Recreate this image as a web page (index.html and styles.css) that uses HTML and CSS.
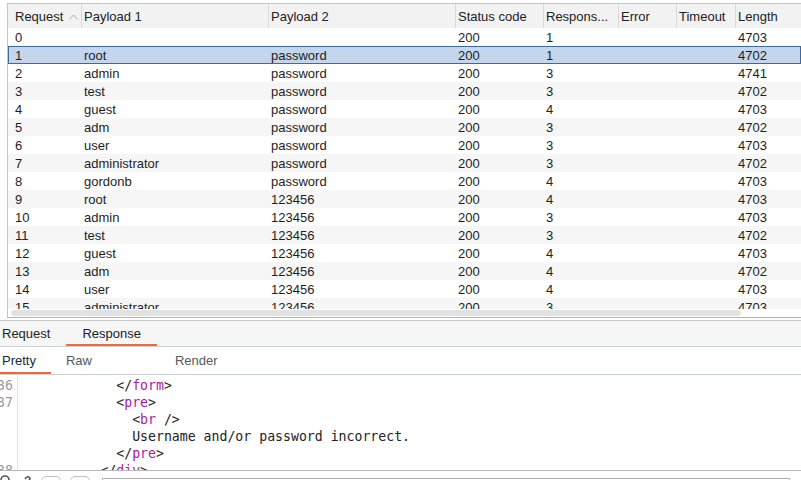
FILE: index.html
```html
<!DOCTYPE html>
<html>
<head>
<meta charset="utf-8">
<link rel="stylesheet" href="styles.css">
</head>
<body>
<div class="results">
  <div class="head">
    <div class="hc first">Request <svg class="sort" width="9" height="6" viewBox="0 0 9 6"><polyline points="0.5,5.5 4.5,1 8.5,5.5" fill="none" stroke="#b0b0b0" stroke-width="1"/></svg></div>
    <div class="hc">Payload 1</div>
    <div class="hc">Payload 2</div>
    <div class="hc">Status code</div>
    <div class="hc">Respons...</div>
    <div class="hc">Error</div>
    <div class="hc">Timeout</div>
    <div class="hc">Length</div>
  </div>
  <div class="body">
    <div class="row"><span>0</span><span></span><span></span><span>200</span><span>1</span><span></span><span></span><span>4703</span></div>
    <div class="row alt sel"><span>1</span><span>root</span><span>password</span><span>200</span><span>1</span><span></span><span></span><span>4702</span></div>
    <div class="row"><span>2</span><span>admin</span><span>password</span><span>200</span><span>3</span><span></span><span></span><span>4741</span></div>
    <div class="row alt"><span>3</span><span>test</span><span>password</span><span>200</span><span>3</span><span></span><span></span><span>4702</span></div>
    <div class="row"><span>4</span><span>guest</span><span>password</span><span>200</span><span>4</span><span></span><span></span><span>4703</span></div>
    <div class="row alt"><span>5</span><span>adm</span><span>password</span><span>200</span><span>3</span><span></span><span></span><span>4702</span></div>
    <div class="row"><span>6</span><span>user</span><span>password</span><span>200</span><span>3</span><span></span><span></span><span>4703</span></div>
    <div class="row alt"><span>7</span><span>administrator</span><span>password</span><span>200</span><span>3</span><span></span><span></span><span>4702</span></div>
    <div class="row"><span>8</span><span>gordonb</span><span>password</span><span>200</span><span>4</span><span></span><span></span><span>4703</span></div>
    <div class="row alt"><span>9</span><span>root</span><span>123456</span><span>200</span><span>4</span><span></span><span></span><span>4703</span></div>
    <div class="row"><span>10</span><span>admin</span><span>123456</span><span>200</span><span>3</span><span></span><span></span><span>4703</span></div>
    <div class="row alt"><span>11</span><span>test</span><span>123456</span><span>200</span><span>3</span><span></span><span></span><span>4702</span></div>
    <div class="row"><span>12</span><span>guest</span><span>123456</span><span>200</span><span>4</span><span></span><span></span><span>4703</span></div>
    <div class="row alt"><span>13</span><span>adm</span><span>123456</span><span>200</span><span>4</span><span></span><span></span><span>4702</span></div>
    <div class="row"><span>14</span><span>user</span><span>123456</span><span>200</span><span>4</span><span></span><span></span><span>4703</span></div>
    <div class="row alt"><span>15</span><span>administrator</span><span>123456</span><span>200</span><span>3</span><span></span><span></span><span>4703</span></div>
  </div>
  <div class="hscroll"><div class="thumb"></div></div>
</div>

<div class="tabs">
  <div class="tab">Request</div>
  <div class="tab active">Response</div>
</div>

<div class="subtabs">
  <div class="subtab active">Pretty</div>
  <div class="subtab dim">Raw</div>
  <div class="subtab dim far">Render</div>
</div>

<div class="editor">
  <div class="gutter">
    <div class="ln">36</div>
    <div class="ln">37</div>
    <div class="ln"></div>
    <div class="ln"></div>
    <div class="ln"></div>
    <div class="ln">38</div>
  </div>
  <div class="code">
<div class="cl">            &lt;/<span class="tg">form</span>&gt;</div>
<div class="cl">            &lt;<span class="tg">pre</span>&gt;</div>
<div class="cl">              &lt;<span class="tg">br</span> /&gt;</div>
<div class="cl">              Username and/or password incorrect.</div>
<div class="cl">            &lt;/<span class="tg">pre</span>&gt;</div>
<div class="cl">          &lt;/<span class="tg">div</span>&gt;</div>
  </div>
</div>

<div class="toolbar">
  <svg class="tb-icon" width="12" height="12" viewBox="0 0 12 12"><circle cx="5" cy="6" r="4" fill="none" stroke="#555" stroke-width="1.6"/></svg>
  <svg class="tb-icon2" width="8" height="12" viewBox="0 0 8 12"><path d="M1 4 Q4 0 6 3 Q6 5 4 6 L4 8" fill="none" stroke="#555" stroke-width="1.5"/></svg>
  <div class="tb-btn"></div>
  <div class="tb-btn"></div>
  <div class="tb-input"></div>
</div>
</body>
</html>
```

FILE: styles.css
```css
html, body {
  margin: 0;
  padding: 0;
  background: #ffffff;
  overflow: hidden;
  height: 480px;
}
body {
  font-family: "Liberation Sans", Arial, sans-serif;
  font-size: 13px;
  color: #1e1e1e;
}
.results {
  margin: 3px 0 0 7px;
  border-top: 1px solid #c4c4c4;
  border-left: 1px solid #c4c4c4;
  border-bottom: 1px solid #b4b4b4;
  overflow: hidden;
}
.head, .row {
  display: grid;
  grid-template-columns: 73px 187px 187px 88px 75px 58px 59px 1fr;
}
.head {
  height: 24px;
  background: #f2f2f2;
}
.hc {
  display: flex;
  align-items: center;
  padding-left: 2px;
  border-left: 1px solid #dadada;
  white-space: nowrap;
  color: #222;
}
.hc.first {
  border-left: none;
  padding-left: 7px;
}
.sort {
  margin-left: 6px;
  margin-top: 1px;
}
.body {
  height: 281px;
  overflow: hidden;
}
.row {
  height: 18px;
  line-height: 18px;
  background: #ffffff;
}
.row.alt {
  background: #f6f6f6;
}
.row.sel {
  background: #c5d6ec;
  box-shadow: inset 0 0 0 1px #3b6aa0;
}
.row span {
  padding: 1px 0 0 3px;
  white-space: nowrap;
  overflow: hidden;
}
.row span:first-child {
  padding-left: 7px;
}
.hscroll {
  height: 8px;
  padding: 1px 0 0 3px;
  box-sizing: border-box;
}
.thumb {
  width: 730px;
  height: 6px;
  border-radius: 3px;
  background: #e2e2e2;
}
.tabs {
  margin-top: 2px;
  border-top: 1px solid #c9c9c9;
  border-bottom: 1px solid #cdd3d3;
  background: #f6f6f6;
  height: 25px;
  display: flex;
}
.tab {
  padding: 0 16px;
  line-height: 25px;
  height: 25px;
  box-sizing: border-box;
  color: #222;
}
.tab:first-child {
  margin-left: -14px;
}
.tab.active {
  box-shadow: inset 0 -2px 0 #ee6a3c;
}
.subtabs {
  display: flex;
  height: 27px;
  border-bottom: 1px solid #cdd3d3;
  background: #ffffff;
}
.subtab {
  padding: 1px 15px 0;
  line-height: 26px;
  height: 27px;
  box-sizing: border-box;
  color: #1c2a35;
}
.subtab:first-child {
  margin-left: -13px;
}
.subtab.active {
  box-shadow: inset 0 -2px 0 #ee6a3c;
}
.subtab.dim {
  color: #4f5a63;
}
.subtab.far {
  margin-left: 53px;
}
.editor {
  display: flex;
  height: 96px;
  overflow: hidden;
  border-bottom: 1px solid #b8b8b8;
  padding-top: 2px;
  box-sizing: border-box;
}
.gutter {
  width: 17px;
  flex: none;
  border-right: 1px solid #e2e2e2;
  box-sizing: content-box;
  margin-top: -2px;
  padding-top: 2px;
}
.ln {
  height: 17px;
  line-height: 17px;
  display: flex;
  justify-content: flex-end;
  padding-right: 4px;
  font-family: "DejaVu Sans Mono", monospace;
  font-size: 13.2px;
  color: #9a9a9a;
  white-space: nowrap;
}
.code {
  padding-left: 3px;
  font-family: "DejaVu Sans Mono", monospace;
  font-size: 13.2px;
  color: #222;
}
.cl {
  height: 17px;
  line-height: 17px;
  white-space: pre;
}
.tg {
  color: #a51aa8;
}
.toolbar {
  display: flex;
  align-items: flex-start;
  height: 12px;
  overflow: hidden;
  padding-top: 2px;
}
.tb-icon {
  margin-left: 0;
  margin-top: 1px;
}
.tb-icon2 {
  margin-left: 12px;
  margin-top: 2px;
}
.tb-btn {
  width: 20px;
  height: 18px;
  margin-left: 9px;
  margin-top: 3px;
  border: 1px solid #bdbdbd;
  border-radius: 5px;
  box-sizing: border-box;
}
.tb-input {
  margin-left: 12px;
  margin-top: 5px;
  width: 688px;
  height: 18px;
  border: 1px solid #b0b0b0;
  box-sizing: border-box;
}
```
